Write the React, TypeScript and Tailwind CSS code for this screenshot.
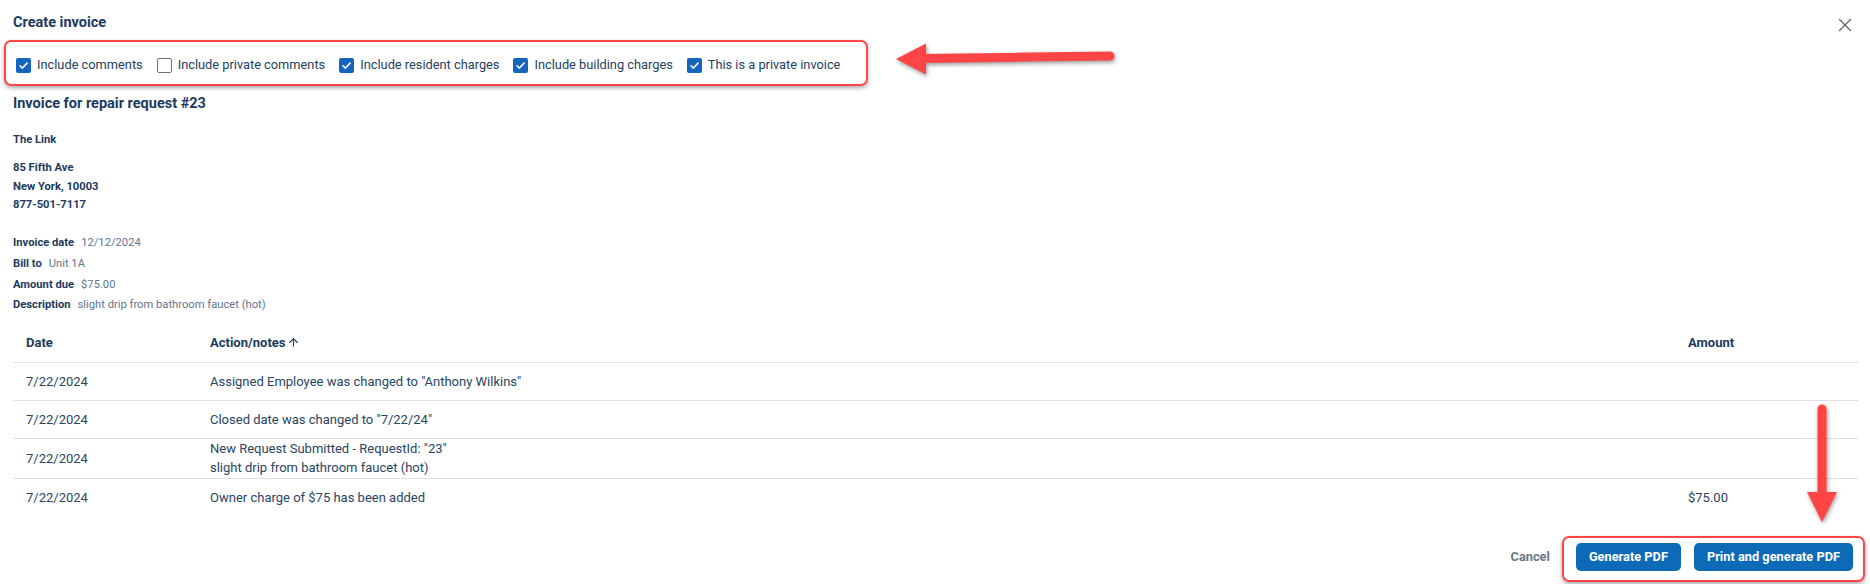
import { X, ArrowUp } from "lucide-react";

const OPTIONS = [
  { label: "Include comments", checked: true },
  { label: "Include private comments", checked: false },
  { label: "Include resident charges", checked: true },
  { label: "Include building charges", checked: true },
  { label: "This is a private invoice", checked: true },
];

const INFO = [
  ["Invoice date", "12/12/2024"],
  ["Bill to", "Unit 1A"],
  ["Amount due", "$75.00"],
  ["Description", "slight drip from bathroom faucet (hot)"],
];

const ROWS = [
  { date: "7/22/2024", notes: ['Assigned Employee was changed to "Anthony Wilkins"'], amount: "" },
  { date: "7/22/2024", notes: ['Closed date was changed to "7/22/24"'], amount: "" },
  {
    date: "7/22/2024",
    notes: ['New Request Submitted - RequestId: "23"', "slight drip from bathroom faucet (hot)"],
    amount: "",
  },
  { date: "7/22/2024", notes: ["Owner charge of $75 has been added"], amount: "$75.00" },
];

function Checkbox({ checked }: { checked: boolean }) {
  if (!checked) {
    return <span className="block w-[15px] h-[15px] rounded-[2px] border-[1.5px] border-[#707070] bg-white" />;
  }
  return (
    <span className="flex items-center justify-center w-[15px] h-[15px] rounded-[2px] bg-[#1565c0]">
      <svg width="11" height="11" viewBox="0 0 12 12" fill="none">
        <path d="M2.2 6.3 L4.8 8.8 L9.9 3.4" stroke="white" strokeWidth="1.7" strokeLinecap="round" strokeLinejoin="round" />
      </svg>
    </span>
  );
}

export default function App() {
  return (
    <div
      className="relative w-[1870px] h-[584px] bg-white overflow-hidden text-[#1c3a5e]"
      style={{ fontFamily: "Roboto, 'Noto Sans', sans-serif" }}
    >
      <div className="pl-[13px] pr-[12px] pt-[13px]">
        {/* header */}
        <div className="flex items-center justify-between h-[20px]">
          <h1 className="text-[14.5px] leading-[20px] font-bold">Create invoice</h1>
          <button className="mr-[2px] mt-[3px] text-[#666]">
            <X size={22} strokeWidth={1.5} />
          </button>
        </div>

        {/* options */}
        <div className="mt-[20px] h-[24px] flex items-center gap-[14px] pl-[3px]">
          {OPTIONS.map((o) => (
            <label key={o.label} className="flex items-center gap-[6px] text-[12.8px] text-[#243f60]">
              <Checkbox checked={o.checked} />
              <span>{o.label}</span>
            </label>
          ))}
        </div>

        <h2 className="mt-[17px] text-[14.5px] leading-[20px] font-bold">Invoice for repair request #23</h2>

        <div className="mt-[17px] text-[11.2px] leading-[18px] font-bold">The Link</div>
        <div className="mt-[10px] text-[11.2px] leading-[18.7px] font-bold">
          <div>85 Fifth Ave</div>
          <div>New York, 10003</div>
          <div>877-501-7117</div>
        </div>

        <div className="mt-[18px] text-[11.2px] leading-[20.7px]">
          {INFO.map(([k, v]) => (
            <div key={k} className="flex gap-[7px]">
              <span className="font-bold">{k}</span>
              <span className="text-[#5f7590]">{v}</span>
            </div>
          ))}
        </div>

        {/* table */}
        <div className="mt-[7px] text-[13px]">
          <div className="grid grid-cols-[184px_1fr_183px] h-[40px] items-center border-b border-[#e0e0e0] font-bold">
            <div className="pl-[13px]">Date</div>
            <div className="pl-[13px] flex items-center gap-[1px]">
              Action/notes
              <ArrowUp size={13} strokeWidth={2} />
            </div>
            <div className="pl-[13px]">Amount</div>
          </div>
          {ROWS.map((r, i) => (
            <div
              key={i}
              className={`grid grid-cols-[184px_1fr_183px] items-center text-[#2a4463] ${
                r.notes.length > 1 ? "h-[39px] leading-[19.5px]" : "h-[37px]"
              } ${i < ROWS.length - 1 ? "box-content border-b border-[#e0e0e0]" : ""}`}
            >
              <div className="pl-[13px]">{r.date}</div>
              <div className="pl-[13px]">
                {r.notes.map((n) => (
                  <div key={n}>{n}</div>
                ))}
              </div>
              <div className="pl-[13px]">{r.amount}</div>
            </div>
          ))}
        </div>

        {/* footer */}
        <div className="mt-[27px] pr-[5px] flex justify-end items-center gap-[13px] text-[12.8px] font-bold">
          <button className="mr-[13px] text-[#6b7785]">Cancel</button>
          <button className="h-[28px] px-[13px] rounded-[5px] bg-[#0d6ab7] text-white">Generate PDF</button>
          <button className="h-[28px] px-[13px] rounded-[5px] bg-[#0d6ab7] text-white">Print and generate PDF</button>
        </div>
      </div>

      {/* annotations */}
      <div className="absolute left-[4px] top-[40px] w-[864px] h-[46px] rounded-[7px] border-[2.5px] border-[#ff4545] shadow-[0_2px_4px_rgba(0,0,0,0.35)] pointer-events-none" />
      <div className="absolute left-[1562px] top-[536px] w-[303px] h-[46px] rounded-[7px] border-[2.5px] border-[#ff4545] shadow-[0_2px_4px_rgba(0,0,0,0.35)] pointer-events-none" />

      <svg className="absolute left-0 top-0 pointer-events-none" width="1870" height="584" style={{ filter: "drop-shadow(1px 2px 2px rgba(0,0,0,0.4))" }}>
        <line x1="920" y1="58.5" x2="1110" y2="56" stroke="#ff4545" strokeWidth="9" strokeLinecap="round" />
        <polygon points="896,59 926,43.5 926,74.5" fill="#ff4545" />
        <line x1="1822" y1="409" x2="1822" y2="496" stroke="#ff4545" strokeWidth="9" strokeLinecap="round" />
        <polygon points="1807,492 1837,492 1822,522" fill="#ff4545" />
      </svg>
    </div>
  );
}
